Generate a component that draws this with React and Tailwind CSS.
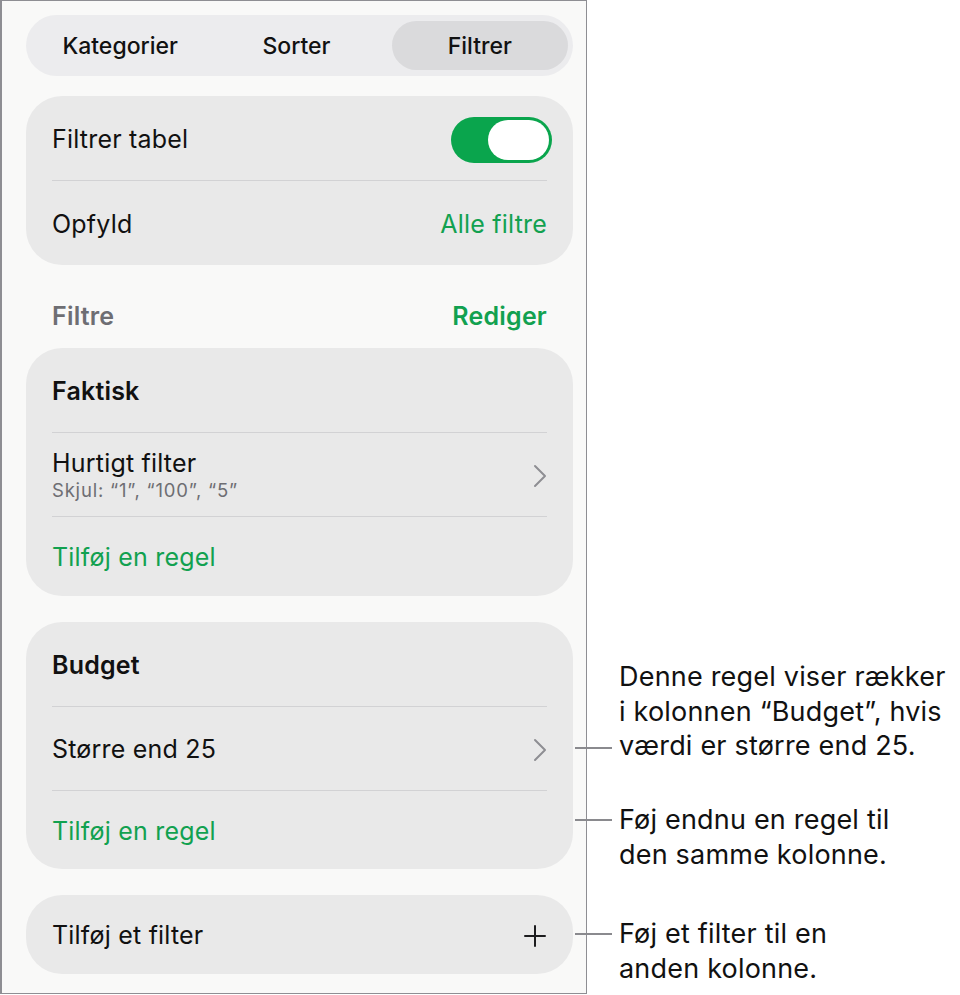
import { useState } from 'react';

const green = 'text-[#12a150]';
const body = 'text-[25px] tracking-[0.2px]';

function Chevron() {
  return (
    <svg width="14" height="24" viewBox="0 0 14 24" fill="none" className="shrink-0">
      <polyline points="2,2 12,12 2,22" stroke="#8e8e93" strokeWidth="2" strokeLinecap="round" strokeLinejoin="round" />
    </svg>
  );
}

function Plus() {
  return (
    <svg width="24" height="24" viewBox="0 0 24 24" fill="none" className="shrink-0">
      <path d="M12 2v20M2 12h20" stroke="#1c1c1e" strokeWidth="2" strokeLinecap="round" />
    </svg>
  );
}

function Toggle({ on, onClick }) {
  return (
    <button
      onClick={onClick}
      className={`-mr-[5px] w-[101px] h-[46px] rounded-full p-[3px] flex ${on ? 'bg-[#0aa54d] justify-end' : 'bg-[#d1d1d6] justify-start'}`}
    >
      <span className="w-[61px] h-[40px] rounded-full bg-white" />
    </button>
  );
}

const Sep = () => <div className="mx-[26px] h-px bg-[#d2d2d4]" />;

function Card({ children }) {
  return <div className="bg-[#e9e9e9] rounded-[36px]">{children}</div>;
}

function Row({ children, className = 'h-[84px]' }) {
  return <div className={`${className} px-[26px] pt-[3px] flex items-center justify-between`}>{children}</div>;
}

function Callout({ top, lineTop, children }) {
  return (
    <>
      <div className="absolute left-[575px] w-[37px] h-[2px] bg-[#8a8a8e]" style={{ top: lineTop }} />
      <p className="absolute left-[619px] text-[27px] tracking-[0.2px] leading-[34.5px] text-[#111] whitespace-nowrap" style={{ top }}>
        {children}
      </p>
    </>
  );
}

export default function App() {
  const [tab, setTab] = useState('Filtrer');
  const [aktiv, setAktiv] = useState(true);
  const tabs = ['Kategorier', 'Sorter', 'Filtrer'];

  return (
    <div className="relative w-[960px] h-[995px] bg-white font-['Inter','Liberation_Sans',sans-serif] text-[#111]">
      <div className="w-[587px] h-[994px] bg-[#f9f9f8] border border-[#8e8e93] border-l-2 pl-[24px] pr-[13px] pt-[14px] flex flex-col">
        {/* Segmenteret kontrol */}
        <div className="h-[61px] rounded-full bg-[#ececee] p-[6px] pr-[5px] flex">
          {tabs.map((t) => (
            <button
              key={t}
              onClick={() => setTab(t)}
              className={`flex-1 pt-[2px] rounded-full text-[23px] font-medium ${tab === t ? 'bg-[#dadadc] ml-[7px]' : ''}`}
            >
              {t}
            </button>
          ))}
        </div>

        <div className="mt-[20px]">
          <Card>
            <Row>
              <span className={body}>Filtrer tabel</span>
              <Toggle on={aktiv} onClick={() => setAktiv(!aktiv)} />
            </Row>
            <Sep />
            <Row>
              <span className={body}>Opfyld</span>
              <span className={`${body} ${green}`}>Alle filtre</span>
            </Row>
          </Card>
        </div>

        <div className="h-[83px] px-[26px] pt-[20px] flex items-center justify-between">
          <span className={`${body} font-semibold text-[#6e6e73]`}>Filtre</span>
          <span className={`${body} font-semibold ${green}`}>Rediger</span>
        </div>

        <Card>
          <Row>
            <span className={`${body} font-semibold`}>Faktisk</span>
          </Row>
          <Sep />
          <Row className="h-[83px]">
            <div className="flex flex-col -mt-[2px]">
              <span className={`${body} leading-[30px]`}>Hurtigt filter</span>
              <span className="text-[18.5px] tracking-[0.8px] leading-[24px] text-[#6e6e73]">Skjul: “1”, “100”, “5”</span>
            </div>
            <Chevron />
          </Row>
          <Sep />
          <Row className="h-[79px]">
            <span className={`${body} ${green}`}>Tilføj en regel</span>
          </Row>
        </Card>

        <div className="mt-[26px]">
          <Card>
            <Row>
              <span className={`${body} font-semibold`}>Budget</span>
            </Row>
            <Sep />
            <Row className="h-[83px]">
              <span className={body}>Større end 25</span>
              <Chevron />
            </Row>
            <Sep />
            <Row className="h-[78px]">
              <span className={`${body} ${green}`}>Tilføj en regel</span>
            </Row>
          </Card>
        </div>

        <div className="mt-[26px]">
          <Card>
            <Row className="h-[79px]">
              <span className={body}>Tilføj et filter</span>
              <Plus />
            </Row>
          </Card>
        </div>
      </div>

      <Callout top={660} lineTop={747}>
        Denne regel viser rækker
        <br />i kolonnen “Budget”, hvis
        <br />værdi er større end 25.
      </Callout>
      <Callout top={803} lineTop={819}>
        Føj endnu en regel til
        <br />den samme kolonne.
      </Callout>
      <Callout top={917} lineTop={933}>
        Føj et filter til en
        <br />anden kolonne.
      </Callout>
    </div>
  );
}
